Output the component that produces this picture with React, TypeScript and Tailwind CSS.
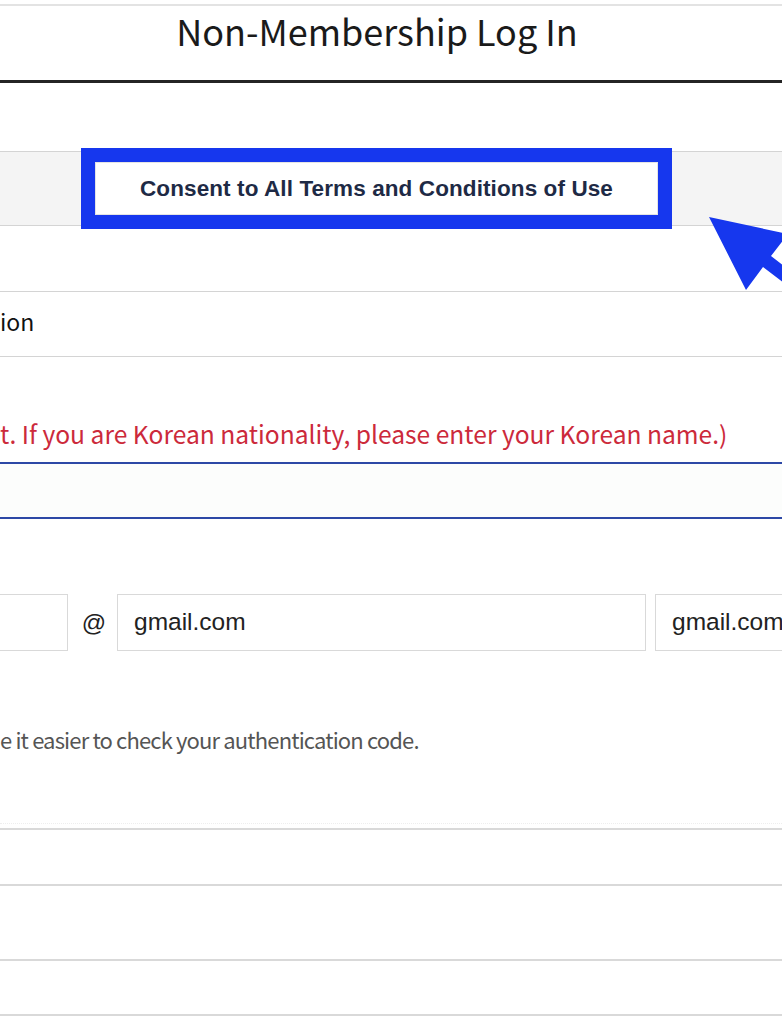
import React from 'react';

const sans = { fontFamily: '"Noto Sans CJK KR", "Noto Sans", sans-serif' };
const arial = { fontFamily: '"Liberation Sans", Arial, sans-serif' };

function Arrow() {
  return (
    <svg className="absolute left-0 top-0 pointer-events-none" width="782" height="1032" viewBox="0 0 782 1032">
      <polygon
        points="709,217 788,234 771,256 831,302 823,313 763,267 746,290"
        fill="#1637ee"
      />
    </svg>
  );
}

export default function App() {
  return (
    <div className="relative w-[782px] h-[1032px] overflow-hidden bg-white" style={sans}>
      <div className="mt-[4px] h-[2px] bg-[#e3e3e3]" />
      <div className="h-[74px] pr-[28px] text-center">
        <h1 className="text-[36px] leading-[48px] text-[#1a1a1a]">Non-Membership Log In</h1>
      </div>
      <div className="h-[3px] bg-[#242424]" />

      <div className="mt-[68px] h-[75px] border-y border-[#d4d4d4] bg-[#f4f4f4] flex items-center">
        <button
          type="button"
          className="ml-[95px] w-[563px] h-[53px] bg-white border border-[#e4e4e4] outline-[14px] outline-solid outline-[#1637ee] flex items-center justify-center"
        >
          <span className="text-[22.5px] font-bold tracking-[0.1px] text-[#1e2a45]" style={arial}>
            Consent to All Terms and Conditions of Use
          </span>
        </button>
      </div>

      <div className="mt-[65px] h-[66px] border-y border-[#d4d4d4] flex items-center">
        <span className="text-[23px] leading-[30px] text-[#111] -mt-[6px]">ion</span>
      </div>

      <p className="mt-[61px] text-[24.6px] leading-[30px] text-[#cc2a3b] whitespace-nowrap">
        t. If you are Korean nationality, please enter your Korean name.)
      </p>

      <div className="mt-[14px] h-[57px] border-y-2 border-[#2d48a6] bg-[#fcfdfc]" />

      <div className="mt-[75px] flex items-center h-[57px]">
        <div className="w-[68px] shrink-0 h-full border-y border-r border-[#d9d9d9]" />
        <div className="w-[49px] shrink-0 text-center text-[24px] pl-[3px] text-[#222]" style={arial}>
          @
        </div>
        <div className="w-[529px] shrink-0 h-full border border-[#d9d9d9] flex items-center pl-[16px] text-[24.5px] text-[#222]" style={arial}>
          gmail.com
        </div>
        <div className="ml-[9px] w-[160px] shrink-0 h-full border border-[#d9d9d9] flex items-center pl-[16px] text-[24.5px] text-[#222]" style={arial}>
          gmail.com
        </div>
      </div>

      <p className="mt-[73px] text-[22px] leading-[30px] tracking-[-0.85px] text-[#555] whitespace-nowrap">
        e it easier to check your authentication code.
      </p>

      <div className="mt-[69px] border-t border-dotted border-[#eeeeee]" />
      <div className="mt-[4px] h-[2px] bg-[#d9d9d9]" />
      <div className="mt-[54px] h-[2px] bg-[#d9d9d9]" />
      <div className="mt-[73px] h-[2px] bg-[#d9d9d9]" />
      <div className="mt-[53px] h-[2px] bg-[#d9d9d9]" />

      <Arrow />
    </div>
  );
}
